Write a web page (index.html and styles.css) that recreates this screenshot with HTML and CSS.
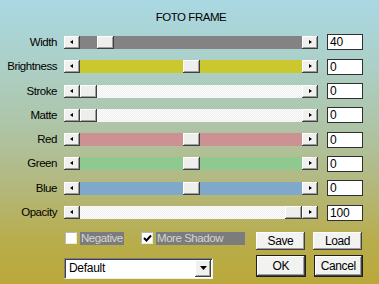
FILE: index.html
```html
<!DOCTYPE html>
<html>
<head>
<meta charset="utf-8">
<link rel="stylesheet" href="styles.css">
</head>
<body>
<div class="dialog">
  <div class="title">FOTO FRAME</div>
  <div class="sliders">
    <div class="row"><span class="label">Width</span><div class="sb"><span class="btn arrow-l"></span><div class="track t-gray"><span class="thumb" style="left:17px"></span></div><span class="btn arrow-r"></span></div><span class="field">40</span></div>
    <div class="row"><span class="label">Brightness</span><div class="sb"><span class="btn arrow-l"></span><div class="track t-yellow"><span class="thumb" style="left:103px"></span></div><span class="btn arrow-r"></span></div><span class="field">0</span></div>
    <div class="row"><span class="label">Stroke</span><div class="sb"><span class="btn arrow-l"></span><div class="track t-white"><span class="thumb" style="left:0px"></span></div><span class="btn arrow-r"></span></div><span class="field">0</span></div>
    <div class="row"><span class="label">Matte</span><div class="sb"><span class="btn arrow-l"></span><div class="track t-white"><span class="thumb" style="left:0px"></span></div><span class="btn arrow-r"></span></div><span class="field">0</span></div>
    <div class="row"><span class="label">Red</span><div class="sb"><span class="btn arrow-l"></span><div class="track t-red"><span class="thumb" style="left:103px"></span></div><span class="btn arrow-r"></span></div><span class="field">0</span></div>
    <div class="row"><span class="label">Green</span><div class="sb"><span class="btn arrow-l"></span><div class="track t-green"><span class="thumb" style="left:103px"></span></div><span class="btn arrow-r"></span></div><span class="field">0</span></div>
    <div class="row"><span class="label">Blue</span><div class="sb"><span class="btn arrow-l"></span><div class="track t-blue"><span class="thumb" style="left:103px"></span></div><span class="btn arrow-r"></span></div><span class="field">0</span></div>
    <div class="row"><span class="label">Opacity</span><div class="sb"><span class="btn arrow-l"></span><div class="track t-white"><span class="thumb" style="left:205px"></span></div><span class="btn arrow-r"></span></div><span class="field">100</span></div>
  </div>
  <div class="bottom">
    <div class="checks">
      <span class="check"></span><span class="clabel neg">Negative</span>
      <span class="check checked"><svg width="9" height="9" viewBox="0 0 9 9"><path d="M1 4 L3.5 6.5 L8 1.5" fill="none" stroke="#000" stroke-width="2"/></svg></span><span class="clabel shadow">More Shadow</span>
    </div>
    <div class="pair top">
      <span class="button small">Save</span>
      <span class="button small">Load</span>
    </div>
    <div class="select">
      <span class="sel-text">Default</span>
      <span class="sel-btn"><svg width="7" height="4" viewBox="0 0 7 4"><path d="M0 0 H7 L3.5 4 Z" fill="#000"/></svg></span>
    </div>
    <div class="pair">
      <span class="button big">OK</span>
      <span class="button big">Cancel</span>
    </div>
  </div>
</div>
</body>
</html>
```

FILE: styles.css
```css
html, body {
  margin: 0;
  padding: 0;
}
body {
  width: 379px;
  height: 284px;
  overflow: hidden;
  font-family: "Liberation Sans", Arial, sans-serif;
  font-size: 11.5px;
  letter-spacing: -0.45px;
  color: #000;
}
.dialog {
  width: 379px;
  height: 284px;
  background: linear-gradient(180deg, #a9d8e3 0%, #acd0c8 22%, #aec4a6 45%, #b3b87e 65%, #b8ad4c 85%, #baa83a 100%);
}
.title {
  padding-top: 11px;
  height: 13px;
  line-height: 13px;
  margin-bottom: 6.35px;
  text-align: center;
  padding-left: 3px;
}
.sliders {
  display: flex;
  flex-direction: column;
}
.row {
  display: flex;
  align-items: center;
  height: 24.3px;
}
.label {
  width: 57px;
  text-align: right;
  margin-right: 7px;
  line-height: 13px;
}
.sb {
  display: flex;
  width: 254px;
  height: 13px;
}
.btn {
  width: 16px;
  height: 13px;
  box-sizing: border-box;
  background: #f0f0ee;
  box-shadow: inset -1px -1px #404040, inset 1px 1px #ffffff, inset -2px -2px #9a9a9a;
  position: relative;
}
.btn::after {
  content: "";
  position: absolute;
  top: 4px;
  width: 0;
  height: 0;
  border-top: 2.5px solid transparent;
  border-bottom: 2.5px solid transparent;
}
.arrow-l::after {
  left: 6px;
  border-right: 3px solid #000;
}
.arrow-r::after {
  left: 7px;
  border-left: 3px solid #000;
}
.track {
  flex: 1;
  position: relative;
  height: 13px;
}
.thumb {
  position: absolute;
  top: 0;
  width: 17px;
  height: 13px;
  box-sizing: border-box;
  background: #eeeeec;
  box-shadow: inset -1px -1px #404040, inset 1px 1px #ffffff, inset -2px -2px #a0a0a0;
}
.t-gray { background: #838383; }
.t-yellow { background: #cbc72e; }
.t-white { background: repeating-conic-gradient(#ffffff 0 25%, #ececec 0 50%) 0 0 / 2px 2px; }
.t-red { background: #cc9293; }
.t-green { background: #90c98f; }
.t-blue { background: #80a8ca; }
.field {
  margin-left: 9px;
  width: 36px;
  height: 16px;
  box-sizing: border-box;
  background: #fff;
  border: 1px solid #303030;
  font-size: 12px;
  line-height: 14px;
  padding-left: 2px;
  letter-spacing: -0.2px;
}
.bottom {
  display: grid;
  grid-template-columns: 192px 107px;
  grid-template-rows: 18px 24px;
  row-gap: 5px;
  padding-left: 64px;
  margin-top: 7.25px;
}
.checks {
  display: flex;
  align-items: center;
  height: 13px;
}
.check {
  width: 12px;
  height: 12px;
  box-sizing: border-box;
  background: #fff;
  border: 1px solid;
  border-color: #b8b8b8 #e8e8e8 #e8e8e8 #b8b8b8;
  margin-left: 1px;
  margin-right: 3px;
  display: flex;
  align-items: center;
  justify-content: center;
}
.clabel {
  background: #7c7c7c;
  color: #d4d4d4;
  height: 13px;
  line-height: 13px;
  padding: 0 1px 0 1px;
}
.neg {
  width: 42px;
  margin-right: 16px;
}
.shadow {
  width: 87px;
}
.pair {
  display: flex;
  gap: 8px;
}
.pair.top {
  margin-top: 0;
}
.button {
  box-sizing: border-box;
  display: flex;
  align-items: center;
  justify-content: center;
  background: #f2f2f0;
  font-size: 12px;
  letter-spacing: -0.4px;
}
.small {
  width: 49px;
  height: 18px;
  box-shadow: inset -1px -1px #404040, inset 1px 1px #ffffff, inset -2px -2px #a0a0a0;
}
.big {
  height: 22px;
  box-shadow: inset 0 0 0 1px #202020, inset -2px -2px #404040, inset 2px 2px #ffffff, inset -3px -3px #a0a0a0;
}
.big:first-child { width: 51px; }
.big:last-child { width: 51px; }
.select {
  width: 149px;
  height: 21px;
  margin-top: 3px;
  box-sizing: border-box;
  background: #fff;
  border: 1px solid;
  border-color: #808080 #f0f0f0 #f0f0f0 #808080;
  box-shadow: inset 1px 1px #404040;
  display: flex;
  align-items: center;
  justify-content: space-between;
  padding: 1px 1px 1px 4px;
}
.sel-text {
  font-size: 12px;
  letter-spacing: -0.3px;
}
.sel-btn {
  width: 16px;
  height: 17px;
  box-sizing: border-box;
  background: #f0f0ee;
  box-shadow: inset -1px -1px #404040, inset 1px 1px #ffffff, inset -2px -2px #a0a0a0;
  display: flex;
  align-items: center;
  justify-content: center;
}
```
